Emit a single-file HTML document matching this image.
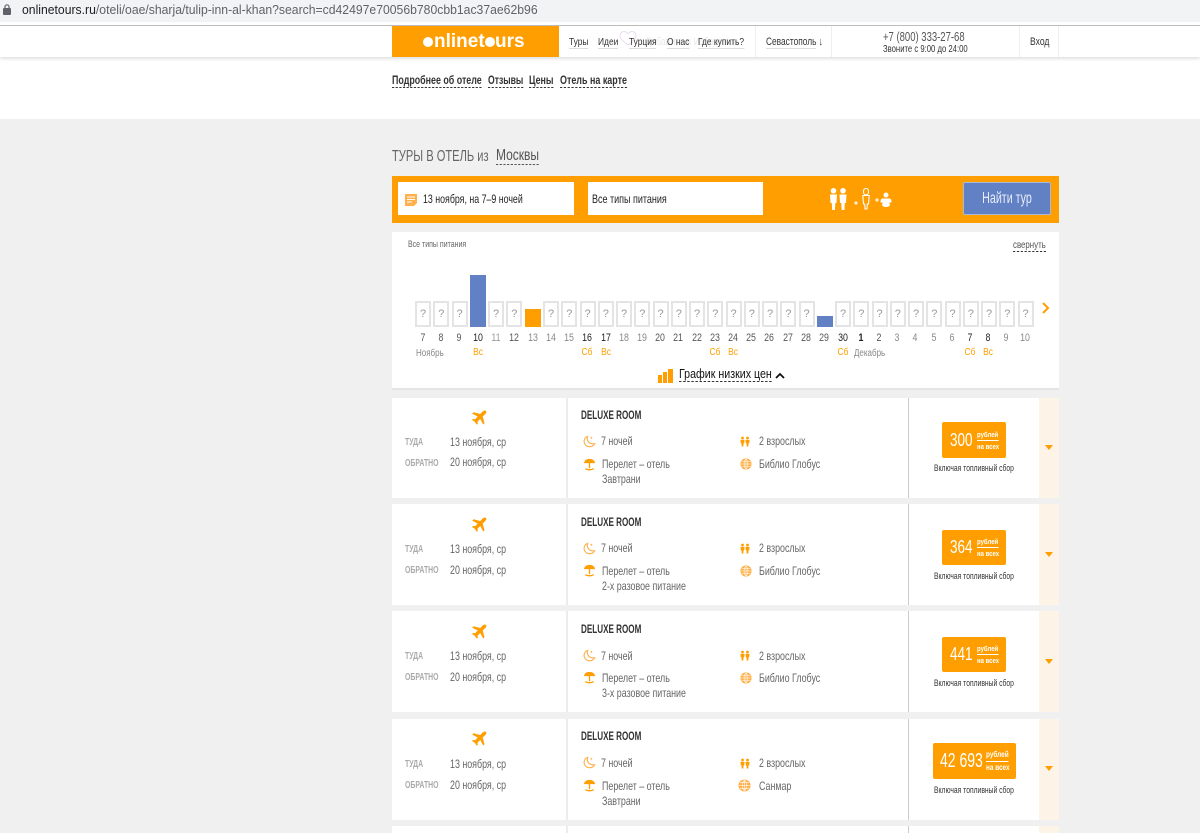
<!DOCTYPE html>
<html lang="ru"><head><meta charset="utf-8"><title>onlinetours</title>
<style>
html,body{margin:0;padding:0;width:1200px;height:833px;overflow:hidden;background:#f0f0f0;font-family:"Liberation Sans",sans-serif;color:#333}
div,span,svg{position:absolute}
.t{white-space:nowrap;line-height:14px;height:14px;transform-origin:0 50%;transform:scaleX(.8);font-size:12px}
.c{transform-origin:50% 50%;text-align:center;width:40px}
u{text-decoration:none;border-bottom:1px solid #ddd}
.d{border-bottom:1px dashed #333}
.k{font-weight:bold;transform:scaleX(.74);top:73px}
.b{border:2px solid #e4e4e4;box-sizing:border-box;width:16px;height:26px;top:301px;background:#fff;color:#999;font-size:11px;line-height:22px;text-align:center}
.n{top:331px;font-size:11px;color:#555}
.o{top:345px;font-size:10.500px;color:#ff9e00}
.g{color:#666;font-size:12px;transform:scaleX(.74)}
.l{color:#aaa;font-size:10px;font-weight:bold;transform:scaleX(.69)}
.h{font-size:11.500px;font-weight:bold;transform:scaleX(.705)}
.f{font-size:9px;color:#333;transform:scaleX(.75)}
.p{height:16px;line-height:16px;font-size:18px;color:#fff;transform:scaleX(.75)}
.r{font-size:7.500px;font-weight:bold;color:#fff;height:11px;line-height:11px}
.card{left:392px;width:667px;background:#fff}
.v1{left:174px;width:2px;top:0;bottom:0;background:#ececec}
.v2{left:516px;width:1px;top:0;bottom:0;background:#ccc}
.strip{left:647px;width:20px;top:0;bottom:0;background:#fdf3e6}
.tri{width:0;height:0;border-left:4.500px solid transparent;border-right:4.500px solid transparent;border-top:5px solid #ff9e00}
.pr{background:#ff9e00;border-radius:2px;color:#fff}
</style></head><body>
<svg width="0" height="0" style="left:0;top:0"><defs>
<symbol id="plane" viewBox="0 0 16 16"><path fill="#ff9e00" d="M15 1c-1-1-2.400-.4-3.200.4L9.200 4 2.500 2.300 1.200 3.600 6.700 6.500 4.100 9.200 2 8.900 1 9.900 3.800 11.900 5.800 14.800 6.800 13.800 6.500 11.700 9.200 9 12.200 14.500 13.500 13.200 11.700 6.500 14.400 3.900C15.200 3.100 15.800 2 15 1Z"/></symbol>
<symbol id="moon" viewBox="0 0 14 14"><path fill="none" stroke="#ffb04a" stroke-width="1.200" d="M5 1.500C3.500 6 6.500 10 12.500 9.500 11 12 8.500 13 6 12.500 2 11.700.5 8 1.500 5 2 3.500 3.300 2 5 1.500Z"/><path stroke="#ffb04a" d="M8 3h2M9 2v2"/></symbol>
<symbol id="umb" viewBox="0 0 14 14"><path fill="#ff9e00" d="M1 5.500C1.500 2.500 4 1 7 1s5.500 1.500 6 4.500Z"/><path stroke="#ff9e00" stroke-width="1.400" fill="none" d="M7 5v6M2.500 11.500c3 1.600 6 1.600 9 0"/></symbol>
<symbol id="ppl" viewBox="0 0 12 12"><g fill="#ff9e00"><circle cx="3" cy="1.800" r="1.700"/><circle cx="9" cy="1.800" r="1.700"/><path d="M.5 4h5l-.5 4.200H4.200L4 12H2L1.800 8.200H1ZM6.500 4h5l-.5 4.200H10.200L10 12H8L7.800 8.200H7Z"/></g></symbol>
<symbol id="globe" viewBox="0 0 14 14"><circle cx="7" cy="7" r="6.500" fill="#ffb04a"/><path fill="none" stroke="#fff" stroke-width=".6" d="M1 7h12M2 4h10M2 10h10M7 1v12M7 1C4 4 4 10 7 13M7 1c3 3 3 9 0 12"/></symbol>
</defs></svg>

<!-- browser bar -->
<div style="left:0;top:0;width:1200px;height:22px;background:#f1f3f4"></div>
<div style="left:0;top:22px;width:1200px;height:3px;background:#fff"></div>
<div style="left:0;top:25px;width:1200px;height:1px;background:#bdbdbd"></div>
<svg style="left:3px;top:4px" width="8" height="11" viewBox="0 0 8 11"><rect x="0" y="4" width="8" height="7" rx="1" fill="#5f6368"/><path d="M2 4.500V2.800a2 2 0 0 1 4 0V4.500" fill="none" stroke="#5f6368" stroke-width="1.200"/></svg>
<div class="t" style="left:22px;top:3px;font-size:13px;transform:scaleX(.938);color:#5f6368"><span style="position:static;color:#202124">onlinetours.ru</span>/oteli/oae/sharja/tulip-inn-al-khan?search=cd42497e70056b780cbb1ac37ae62b96</div>

<!-- white top -->
<div style="left:0;top:26px;width:1200px;height:93px;background:#fff"></div>
<div style="left:0;top:26px;width:1200px;height:31px;background:#fff;box-shadow:0 2px 3px rgba(0,0,0,.12)"></div>
<div style="left:392px;top:26px;width:167px;height:31px;background:#ff9e00"></div>
<div class="t" style="left:434px;top:31px;height:22px;line-height:22px;font-size:19px;font-weight:bold;color:#fff;transform:none">nlinet</div>
<div class="t" style="left:495px;top:31px;height:22px;line-height:22px;font-size:19px;font-weight:bold;color:#fff;transform:none">urs</div>
<div style="left:423px;top:37px;width:10px;height:10px;border-radius:50%;background:#fff"></div>
<div style="left:485px;top:37px;width:10px;height:10px;border-radius:50%;background:#fff"></div>

<div class="t" style="left:645px;top:35px;font-size:11px;color:#e8e8e8">Добавить в Избранное</div>
<svg style="left:619px;top:30px" width="18" height="17" viewBox="0 0 18 17"><path d="M9 15C4 11 1 8.500 1 5.500 1 3 3 1.500 5 1.500 6.800 1.500 8 2.500 9 4 10 2.500 11.200 1.500 13 1.500 15 1.500 17 3 17 5.500 17 8.500 14 11 9 15Z" fill="none" stroke="#eadcf0"/></svg>

<div class="t" style="left:569px;top:35px;font-size:10.500px"><u>Туры</u></div>
<div class="t" style="left:598px;top:35px;font-size:10.500px"><u>Идеи</u></div>
<div class="t" style="left:629px;top:35px;font-size:10.500px"><u>Турция</u></div>
<div class="t" style="left:667px;top:35px;font-size:10.500px"><u>О нас</u></div>
<div class="t" style="left:698px;top:35px;font-size:10.500px"><u>Где купить?</u></div>
<div style="left:755px;top:26px;width:1px;height:31px;background:#eee"></div>
<div class="t" style="left:766px;top:35px;font-size:11px;transform:scaleX(.76)"><u>Севастополь</u> ↓</div>
<div style="left:831px;top:26px;width:1px;height:31px;background:#eee"></div>
<div class="t" style="left:883px;top:30px;font-size:12.500px;color:#555;transform:scaleX(.76)">+7 (800) 333-27-68</div>
<div class="t" style="left:883px;top:43px;font-size:10px;color:#333;transform:scaleX(.77)">Звоните с 9:00 до 24:00</div>
<div style="left:1019px;top:26px;width:1px;height:31px;background:#eee"></div>
<div class="t" style="left:1030px;top:35px;font-size:11px;transform:scaleX(.78)">Вход</div>
<div style="left:1058px;top:26px;width:1px;height:31px;background:#eee"></div>

<div class="t d k" style="left:392px">Подробнее об отеле</div>
<div class="t d k" style="left:488px;transform:scaleX(.72)">Отзывы</div>
<div class="t d k" style="left:529px">Цены</div>
<div class="t d k" style="left:560px;transform:scaleX(.745)">Отель на карте</div>

<!-- heading -->
<div class="t" style="left:392px;top:150px;font-size:16px;color:#666;transform:scaleX(.695)">ТУРЫ В ОТЕЛЬ из</div>
<div class="t d" style="left:496px;top:149px;font-size:16px;height:15px;color:#555;border-bottom-color:#555;transform:scaleX(.75)">Москвы</div>

<!-- search -->
<div style="left:392px;top:176px;width:667px;height:47px;background:#ff9e00"></div>
<div style="left:398px;top:182px;width:176px;height:33px;background:#fff"></div>
<div style="left:588px;top:182px;width:175px;height:33px;background:#fff"></div>
<svg style="left:405px;top:192px" width="12" height="14" viewBox="0 0 12 14"><path d="M0 2h12v9l-3 3H0Z" fill="#ffb04a"/><path d="M2 5h8M2 7.500h8M2 10h5" stroke="#fff"/></svg>
<div class="t" style="left:423px;top:192px;font-size:12px;color:#222;transform:scaleX(.735)">13 ноября, на 7–9 ночей</div>
<div class="t" style="left:592px;top:192px;font-size:12px;color:#222;transform:scaleX(.75)">Все типы питания</div>
<svg style="left:828px;top:186px" width="64" height="27" viewBox="0 0 64 27"><g fill="#fff"><circle cx="5.500" cy="4.800" r="2.800"/><circle cx="15" cy="4.800" r="2.800"/><path d="M2 8.500h7l-.5 8.500H7.300L7 24H4.200L3.800 17H2.500ZM11.500 8.500h7l-.5 8.500H16.800L16.500 24H13.700L13.300 17H12Z"/><circle cx="58" cy="9" r="2.500"/><path d="M54 12.500h8c1 .6 1.500 1.800 1.500 3 0 1-.8 1.300-1.500 1l-1 .2 1 1.800c0 1.500-2 2.500-4 2.500s-4-1-4-2.500l1-1.800-1-.2c-.7.300-1.500 0-1.500-1 0-1.200.5-2.400 1.500-3Z"/><path d="M26 16.500h4v1h-4ZM27.500 15h1v4h-1ZM47 13.500h4v1h-4ZM48.500 12h1v4h-1Z"/></g><path d="M38 9C36.500 9 35.500 7.500 35.500 5.500S36.500 2.500 38 2.500 40.500 3.500 40.500 5.500 39.500 9 38 9ZM34.800 9.500h6.400l-.7 8.500H39.300L39 23H37L36.700 18H35.500Z" fill="none" stroke="#fff" stroke-width="1.100"/></svg>
<div style="left:963px;top:182px;width:88px;height:33px;box-sizing:border-box;background:#6280c4;border:1px solid #a9b8d8;border-radius:2px"></div>
<div class="t c" style="left:967px;top:192px;width:80px;font-size:15.500px;color:#e8edf7;transform:scaleX(.69)">Найти тур</div>

<!-- calendar -->
<div style="left:392px;top:232px;width:667px;height:156px;background:#fff;border-bottom:2px solid #e4e4e4"></div>
<div class="t" style="left:408px;top:238px;font-size:9.500px;color:#666;transform:scaleX(.737)">Все типы питания</div>
<div class="t d" style="left:1013px;top:239px;height:12px;line-height:12px;font-size:10.500px;color:#555;transform:scaleX(.75)">свернуть</div>

<div class="b" style="left:415px">?</div><div class="b" style="left:433.250px">?</div><div class="b" style="left:451.500px">?</div>
<div style="left:470px;top:275px;width:16px;height:52px;background:#6280c4"></div>
<div class="b" style="left:488px">?</div><div class="b" style="left:506.250px">?</div>
<div style="left:525px;top:309px;width:16px;height:18px;background:#ff9e00"></div>
<div class="b" style="left:543px">?</div><div class="b" style="left:561.250px">?</div><div class="b" style="left:579.500px">?</div><div class="b" style="left:597.750px">?</div><div class="b" style="left:616px">?</div><div class="b" style="left:634.250px">?</div><div class="b" style="left:652.500px">?</div><div class="b" style="left:670.750px">?</div><div class="b" style="left:689px">?</div><div class="b" style="left:707.250px">?</div><div class="b" style="left:725.500px">?</div><div class="b" style="left:743.750px">?</div><div class="b" style="left:762px">?</div><div class="b" style="left:780.250px">?</div><div class="b" style="left:798.500px">?</div>
<div style="left:817px;top:316px;width:16px;height:11px;background:#6280c4"></div>
<div class="b" style="left:835px">?</div><div class="b" style="left:853.250px">?</div><div class="b" style="left:871.500px">?</div><div class="b" style="left:889.750px">?</div><div class="b" style="left:908px">?</div><div class="b" style="left:926.250px">?</div><div class="b" style="left:944.500px">?</div><div class="b" style="left:962.750px">?</div><div class="b" style="left:981px">?</div><div class="b" style="left:999.250px">?</div><div class="b" style="left:1017.500px">?</div>

<div class="t c n" style="left:403px">7</div><div class="t c n" style="left:421px">8</div><div class="t c n" style="left:439px">9</div><div class="t c n" style="left:458px;color:#222">10</div><div class="t c n" style="left:476px;color:#999">11</div><div class="t c n" style="left:494px">12</div><div class="t c n" style="left:513px;color:#888">13</div><div class="t c n" style="left:531px;color:#888">14</div><div class="t c n" style="left:549px;color:#888">15</div><div class="t c n" style="left:567px;color:#222">16</div><div class="t c n" style="left:586px;color:#222">17</div><div class="t c n" style="left:604px;color:#888">18</div><div class="t c n" style="left:622px;color:#888">19</div><div class="t c n" style="left:640px">20</div><div class="t c n" style="left:658px">21</div><div class="t c n" style="left:677px">22</div><div class="t c n" style="left:695px">23</div><div class="t c n" style="left:713px">24</div><div class="t c n" style="left:731px">25</div><div class="t c n" style="left:749px">26</div><div class="t c n" style="left:768px">27</div><div class="t c n" style="left:786px">28</div><div class="t c n" style="left:804px">29</div><div class="t c n" style="left:823px;color:#222">30</div><div class="t c n" style="left:841px;color:#222;font-weight:bold">1</div><div class="t c n" style="left:859px">2</div><div class="t c n" style="left:877px;color:#888">3</div><div class="t c n" style="left:895px;color:#888">4</div><div class="t c n" style="left:914px;color:#888">5</div><div class="t c n" style="left:932px;color:#888">6</div><div class="t c n" style="left:950px;color:#222">7</div><div class="t c n" style="left:968px;color:#222">8</div><div class="t c n" style="left:986px;color:#888">9</div><div class="t c n" style="left:1005px;color:#888">10</div>

<div class="t c o" style="left:458px">Вс</div><div class="t c o" style="left:567px">Сб</div><div class="t c o" style="left:586px">Вс</div><div class="t c o" style="left:695px">Сб</div><div class="t c o" style="left:713px">Вс</div><div class="t c o" style="left:823px">Сб</div><div class="t c o" style="left:950px">Сб</div><div class="t c o" style="left:968px">Вс</div>
<div class="t" style="left:416px;top:347px;font-size:10px;color:#888">Ноябрь</div>
<div class="t" style="left:854px;top:347px;font-size:10px;color:#888">Декабрь</div>
<svg style="left:1041px;top:302px" width="9" height="12" viewBox="0 0 9 12"><path d="M2 1l5 5-5 5" fill="none" stroke="#ff9e00" stroke-width="2"/></svg>

<svg style="left:658px;top:368px" width="15" height="15" viewBox="0 0 15 15"><path fill="#ff9e00" d="M0 7h4v8H0ZM5 4h4v11H5ZM10 1h5v14h-5Z"/></svg>
<div class="t d" style="left:679px;top:367px;font-size:13px;height:14px;color:#111;transform:scaleX(.82)">График низких цен</div>
<svg style="left:775px;top:372px" width="10" height="7" viewBox="0 0 10 7"><path d="M1 6l4-4 4 4" fill="none" stroke="#111" stroke-width="1.800"/></svg>

<!-- card backgrounds -->
<div class="card" style="top:398px;height:100px"><div class="v1"></div><div class="v2"></div><div class="strip"></div></div>
<div class="card" style="top:504px;height:101px"><div class="v1"></div><div class="v2"></div><div class="strip"></div></div>
<div class="card" style="top:611px;height:101px"><div class="v1"></div><div class="v2"></div><div class="strip"></div></div>
<div class="card" style="top:719px;height:101px"><div class="v1"></div><div class="v2"></div><div class="strip"></div></div>
<div class="card" style="top:826px;height:7px"><div class="v1"></div><div class="v2"></div><div class="strip"></div></div>

<!-- row 1 -->
<div style="left:392px;top:398px;width:667px;height:100px">
<svg style="left:79px;top:12px;width:16px;height:16px"><use href="#plane"/></svg>
<div class="t l" style="left:13px;top:38px">ТУДА</div><div class="t g" style="left:58px;top:37px">13 ноября, ср</div>
<div class="t l" style="left:13px;top:59px">ОБРАТНО</div><div class="t g" style="left:58px;top:57px">20 ноября, ср</div>
<div class="t h" style="left:189px;top:11px">DELUXE ROOM</div>
<svg style="left:191px;top:37px;width:13px;height:13px"><use href="#moon"/></svg><div class="t g" style="left:209px;top:36px">7 ночей</div>
<svg style="left:191px;top:60px;width:13px;height:13px"><use href="#umb"/></svg><div class="t g" style="left:210px;top:59px">Перелет – отель</div><div class="t g" style="left:210px;top:74px">Завтрани</div>
<svg style="left:348px;top:38px;width:10px;height:11px"><use href="#ppl"/></svg><div class="t g" style="left:367px;top:36px">2 взрослых</div>
<svg style="left:348px;top:60px;width:12px;height:12px"><use href="#globe"/></svg><div class="t g" style="left:367px;top:59px">Библио Глобус</div>
<div class="pr" style="left:550px;top:24px;width:64px;height:36px"></div>
<div class="t p" style="left:558px;top:34px">300</div>
<div class="t r" style="left:585px;top:31px;border-bottom:1px solid #fff">рублей</div>
<div class="t r" style="left:585px;top:43px">на всех</div>
<div class="t f" style="left:542px;top:63px">Включая топливный сбор</div>
<div class="tri" style="left:653px;top:47px"></div>
</div>

<!-- row 2 -->
<div style="left:392px;top:505px;width:667px;height:100px">
<svg style="left:79px;top:12px;width:16px;height:16px"><use href="#plane"/></svg>
<div class="t l" style="left:13px;top:38px">ТУДА</div><div class="t g" style="left:58px;top:37px">13 ноября, ср</div>
<div class="t l" style="left:13px;top:59px">ОБРАТНО</div><div class="t g" style="left:58px;top:58px">20 ноября, ср</div>
<div class="t h" style="left:189px;top:11px">DELUXE ROOM</div>
<svg style="left:191px;top:37px;width:13px;height:13px"><use href="#moon"/></svg><div class="t g" style="left:209px;top:36px">7 ночей</div>
<svg style="left:191px;top:59px;width:13px;height:13px"><use href="#umb"/></svg><div class="t g" style="left:210px;top:59px">Перелет – отель</div><div class="t g" style="left:210px;top:74px">2-х разовое питание</div>
<svg style="left:348px;top:38px;width:10px;height:11px"><use href="#ppl"/></svg><div class="t g" style="left:367px;top:36px">2 взрослых</div>
<svg style="left:348px;top:60px;width:12px;height:12px"><use href="#globe"/></svg><div class="t g" style="left:367px;top:59px">Библио Глобус</div>
<div class="pr" style="left:550px;top:25px;width:64px;height:35px"></div>
<div class="t p" style="left:558px;top:34px">364</div>
<div class="t r" style="left:585px;top:31px;border-bottom:1px solid #fff">рублей</div>
<div class="t r" style="left:585px;top:43px">на всех</div>
<div class="t f" style="left:542px;top:64px">Включая топливный сбор</div>
<div class="tri" style="left:653px;top:47px"></div>
</div>

<!-- row 3 -->
<div style="left:392px;top:612px;width:667px;height:100px">
<svg style="left:79px;top:12px;width:16px;height:16px"><use href="#plane"/></svg>
<div class="t l" style="left:13px;top:38px">ТУДА</div><div class="t g" style="left:58px;top:37px">13 ноября, ср</div>
<div class="t l" style="left:13px;top:59px">ОБРАТНО</div><div class="t g" style="left:58px;top:58px">20 ноября, ср</div>
<div class="t h" style="left:189px;top:11px">DELUXE ROOM</div>
<svg style="left:191px;top:37px;width:13px;height:13px"><use href="#moon"/></svg><div class="t g" style="left:209px;top:37px">7 ночей</div>
<svg style="left:191px;top:59px;width:13px;height:13px"><use href="#umb"/></svg><div class="t g" style="left:210px;top:59px">Перелет – отель</div><div class="t g" style="left:210px;top:74px">3-х разовое питание</div>
<svg style="left:348px;top:38px;width:10px;height:11px"><use href="#ppl"/></svg><div class="t g" style="left:367px;top:37px">2 взрослых</div>
<svg style="left:348px;top:60px;width:12px;height:12px"><use href="#globe"/></svg><div class="t g" style="left:367px;top:59px">Библио Глобус</div>
<div class="pr" style="left:550px;top:25px;width:64px;height:35px"></div>
<div class="t p" style="left:558px;top:34px">441</div>
<div class="t r" style="left:585px;top:31px;border-bottom:1px solid #fff">рублей</div>
<div class="t r" style="left:585px;top:43px">на всех</div>
<div class="t f" style="left:542px;top:64px">Включая топливный сбор</div>
<div class="tri" style="left:653px;top:47px"></div>
</div>

<!-- row 4 -->
<div style="left:392px;top:719px;width:667px;height:100px">
<svg style="left:79px;top:12px;width:16px;height:16px"><use href="#plane"/></svg>
<div class="t l" style="left:13px;top:39px">ТУДА</div><div class="t g" style="left:58px;top:38px">13 ноября, ср</div>
<div class="t l" style="left:13px;top:60px">ОБРАТНО</div><div class="t g" style="left:58px;top:59px">20 ноября, ср</div>
<div class="t h" style="left:189px;top:11px">DELUXE ROOM</div>
<svg style="left:191px;top:37px;width:13px;height:13px"><use href="#moon"/></svg><div class="t g" style="left:209px;top:37px">7 ночей</div>
<svg style="left:191px;top:60px;width:13px;height:13px"><use href="#umb"/></svg><div class="t g" style="left:210px;top:60px">Перелет – отель</div><div class="t g" style="left:210px;top:75px">Завтрани</div>
<svg style="left:348px;top:39px;width:10px;height:11px"><use href="#ppl"/></svg><div class="t g" style="left:367px;top:37px">2 взрослых</div>
<svg style="left:346px;top:60px;width:13px;height:13px"><use href="#globe"/></svg><div class="t g" style="left:367px;top:60px">Санмар</div>
<div class="pr" style="left:541px;top:24px;width:83px;height:36px"></div>
<div class="t p" style="left:548px;top:34px;font-size:20px;transform:scaleX(.7)">42 693</div>
<div class="t r" style="left:594px;top:30px;font-size:8px;height:12px;line-height:12px;border-bottom:1px solid #fff">рублей</div>
<div class="t r" style="left:594px;top:43px;font-size:8px">на всех</div>
<div class="t f" style="left:542px;top:64px">Включая топливный сбор</div>
<div class="tri" style="left:653px;top:47px"></div>
</div>
</body></html>
